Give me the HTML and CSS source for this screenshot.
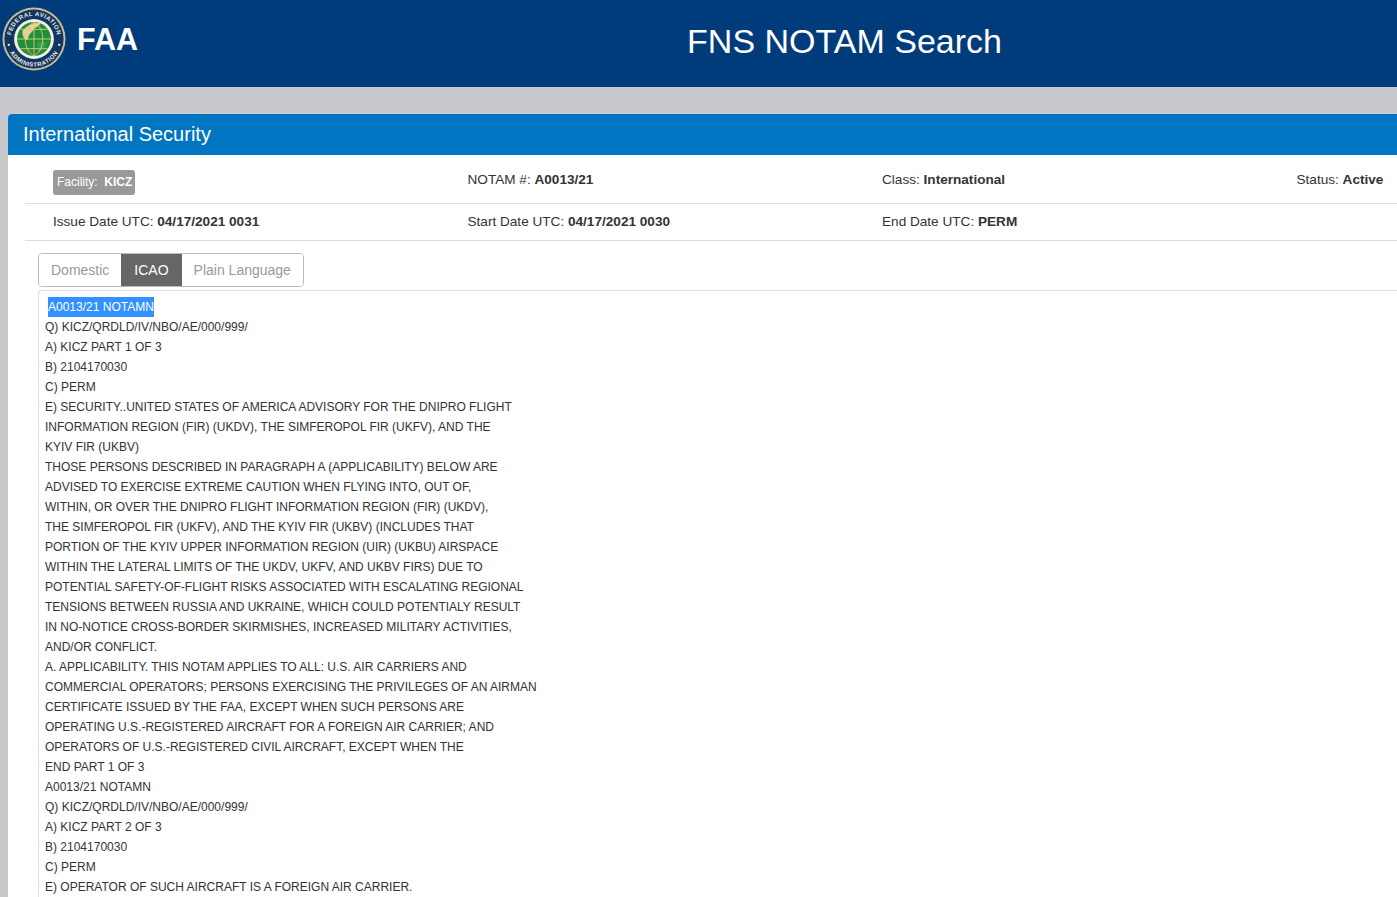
FILE: index.html
```html
<!DOCTYPE html>
<html lang="en">
<head>
  <meta charset="UTF-8">
  <title>FNS NOTAM Search</title>
  <link rel="stylesheet" href="styles.css">
</head>
<body>
  <header class="top-bar">
    <div class="brand">
      <svg class="seal" viewBox="0 0 66 66" role="img" aria-label="FAA seal">
        <defs>
          <path id="seal-top" d="M9 33a24 24 0 0 1 48 0"/>
          <path id="seal-bottom" d="M4.500 33a28.500 28.500 0 0 0 57 0"/>
        </defs>
        <circle cx="33" cy="33" r="32.5" fill="#c9bd8f"/>
        <circle cx="33" cy="33" r="30.5" fill="#123663"/>
        <circle cx="33" cy="33" r="20.5" fill="#f4f2e6"/>
        <circle cx="33" cy="33" r="17.5" fill="#1f8f3d"/>
        <path d="M21 25c4-6 11-9 19-9-1 3-4 5-7 6-1 3-3 4-5 7-1 2-1 4-2 5-3 0-5-4-5-9z" fill="#e8cfa0"/>
        <path d="M37 36c3-1 6 0 9 1-1 4-4 7-8 9-2-3-2-7-1-10z" fill="#38a052"/>
        <path d="M15.500 33h35M33 15.500v35M33 15.500c-12 6-12 29 0 35M33 15.500c12 6 12 29 0 35M19 23h28M19 43h28" fill="none" stroke="#e6cc6e" stroke-width=".9"/>
        <circle cx="7" cy="39" r="1.200" fill="#f4f2e6"/>
        <circle cx="59" cy="39" r="1.200" fill="#f4f2e6"/>
        <text class="seal-text"><textPath href="#seal-top" startOffset="50%" text-anchor="middle">FEDERAL AVIATION</textPath></text>
        <text class="seal-text"><textPath href="#seal-bottom" startOffset="50%" text-anchor="middle">ADMINISTRATION</textPath></text>
      </svg>
      <span class="brand-name">FAA</span>
    </div>
    <h1 class="app-title">FNS NOTAM Search</h1>
  </header>

  <main class="page">
    <section class="card">
      <h2 class="card-title">International Security</h2>

      <div class="meta-row meta-first">
        <div class="meta-cell"><span class="badge">Facility:&nbsp; <b>KICZ</b></span></div>
        <div class="meta-cell">NOTAM #: <b>A0013/21</b></div>
        <div class="meta-cell">Class: <b>International</b></div>
        <div class="meta-cell meta-status">Status: <b>Active</b></div>
      </div>
      <div class="meta-row meta-second">
        <div class="meta-cell">Issue Date UTC: <b>04/17/2021 0031</b></div>
        <div class="meta-cell">Start Date UTC: <b>04/17/2021 0030</b></div>
        <div class="meta-cell">End Date UTC: <b>PERM</b></div>
        <div class="meta-cell"></div>
      </div>

      <div class="tabs">
        <button class="tab">Domestic</button>
        <button class="tab tab-active">ICAO</button>
        <button class="tab">Plain Language</button>
      </div>

      <div class="notam-text">
        <div class="line"><span class="selected">A0013/21 NOTAMN</span></div>
        <div class="line">Q) KICZ/QRDLD/IV/NBO/AE/000/999/</div>
        <div class="line">A) KICZ PART 1 OF 3</div>
        <div class="line">B) 2104170030</div>
        <div class="line">C) PERM</div>
        <div class="line">E) SECURITY..UNITED STATES OF AMERICA ADVISORY FOR THE DNIPRO FLIGHT</div>
        <div class="line">INFORMATION REGION (FIR) (UKDV), THE SIMFEROPOL FIR (UKFV), AND THE</div>
        <div class="line">KYIV FIR (UKBV)</div>
        <div class="line">THOSE PERSONS DESCRIBED IN PARAGRAPH A (APPLICABILITY) BELOW ARE</div>
        <div class="line">ADVISED TO EXERCISE EXTREME CAUTION WHEN FLYING INTO, OUT OF,</div>
        <div class="line">WITHIN, OR OVER THE DNIPRO FLIGHT INFORMATION REGION (FIR) (UKDV),</div>
        <div class="line">THE SIMFEROPOL FIR (UKFV), AND THE KYIV FIR (UKBV) (INCLUDES THAT</div>
        <div class="line">PORTION OF THE KYIV UPPER INFORMATION REGION (UIR) (UKBU) AIRSPACE</div>
        <div class="line">WITHIN THE LATERAL LIMITS OF THE UKDV, UKFV, AND UKBV FIRS) DUE TO</div>
        <div class="line">POTENTIAL SAFETY-OF-FLIGHT RISKS ASSOCIATED WITH ESCALATING REGIONAL</div>
        <div class="line">TENSIONS BETWEEN RUSSIA AND UKRAINE, WHICH COULD POTENTIALY RESULT</div>
        <div class="line">IN NO-NOTICE CROSS-BORDER SKIRMISHES, INCREASED MILITARY ACTIVITIES,</div>
        <div class="line">AND/OR CONFLICT.</div>
        <div class="line">A. APPLICABILITY. THIS NOTAM APPLIES TO ALL: U.S. AIR CARRIERS AND</div>
        <div class="line">COMMERCIAL OPERATORS; PERSONS EXERCISING THE PRIVILEGES OF AN AIRMAN</div>
        <div class="line">CERTIFICATE ISSUED BY THE FAA, EXCEPT WHEN SUCH PERSONS ARE</div>
        <div class="line">OPERATING U.S.-REGISTERED AIRCRAFT FOR A FOREIGN AIR CARRIER; AND</div>
        <div class="line">OPERATORS OF U.S.-REGISTERED CIVIL AIRCRAFT, EXCEPT WHEN THE</div>
        <div class="line">END PART 1 OF 3</div>
        <div class="line">A0013/21 NOTAMN</div>
        <div class="line">Q) KICZ/QRDLD/IV/NBO/AE/000/999/</div>
        <div class="line">A) KICZ PART 2 OF 3</div>
        <div class="line">B) 2104170030</div>
        <div class="line">C) PERM</div>
        <div class="line">E) OPERATOR OF SUCH AIRCRAFT IS A FOREIGN AIR CARRIER.</div>
      </div>
    </section>
  </main>
</body>
</html>
```

FILE: styles.css
```css
*, *::before, *::after {
    box-sizing: border-box;
}
html, body {
    height: 897px;
    overflow: hidden;
}
body {
    margin: 0;
    font-family: 'Liberation Sans', Arial, sans-serif;
    font-size: 14px;
    color: #333;
    background-color: #c8c8cd;
}
.top-bar {
    height: 87px;
    background-color: #003b7c;
    color: white;
    display: flex;
}
.brand {
    width: 292px;
    padding: 7px 0 0 2px;
    display: flex;
    align-items: flex-start;
}
.seal {
    width: 64px;
    height: 64px;
    flex: none;
}
.seal-text {
    font-family: 'Liberation Sans', Arial, sans-serif;
    font-size: 6.2px;
    font-weight: bold;
    letter-spacing: .5px;
    fill: #eeeee2;
}
.brand-name {
    margin: 13px 0 0 11px;
    font-size: 30.5px;
    line-height: 38px;
    font-weight: bold;
}
.app-title {
    margin: 0;
    flex: 1;
    padding: 20px 0 0 0;
    text-align: center;
    font-size: 34px;
    line-height: 42px;
    font-weight: normal;
}
.page {
    padding: 27px 0 0 8px;
}
.card {
    background: white;
    height: 783px;
    border-radius: 4px 0 0 0;
    overflow: hidden;
}
.card-title {
    margin: 0;
    height: 41px;
    padding: 0 15px;
    background-color: #0075c2;
    color: white;
    font-size: 20px;
    line-height: 40px;
    font-weight: normal;
}
.meta-row {
    margin-left: 17px;
    padding-left: 28px;
    display: grid;
    grid-template-columns: 414.5px 414.5px 414.5px 1fr;
    border-bottom: 1px solid #ddd;
    font-size: 13.6px;
}
.meta-first {
    height: 49px;
    padding-top: 15px;
    line-height: 20px;
}
.meta-second {
    height: 37px;
    padding-top: 10px;
    line-height: 16px;
}
.meta-status {
    white-space: nowrap;
}
.badge {
    display: inline-block;
    vertical-align: top;
    height: 25px;
    padding: 0 3px 0 4px;
    background-color: #999;
    color: white;
    border-radius: 3px;
    font-size: 12px;
    line-height: 25px;
}
.tabs {
    margin: 12px 0 0 30px;
    display: inline-flex;
    height: 34px;
    border: 1px solid #bbb;
    border-radius: 4px;
    overflow: hidden;
}
.tab {
    padding: 0 12px;
    border: none;
    background: white;
    color: #999;
    font-family: inherit;
    font-size: 14px;
}
.tab-active {
    background-color: #666;
    color: white;
    padding: 0 13px;
}
.notam-text {
    margin: 3px 0 0 30px;
    padding: 6px 0 0 6px;
    border: 1px solid #ddd;
    border-right: none;
    border-radius: 4px 0 0 0;
    font-size: 12px;
    line-height: 20px;
    color: #333;
}
.selected {
    margin-left: 3px;
    background-color: #3390ff;
    color: white;
    display: inline-block;
}
```
